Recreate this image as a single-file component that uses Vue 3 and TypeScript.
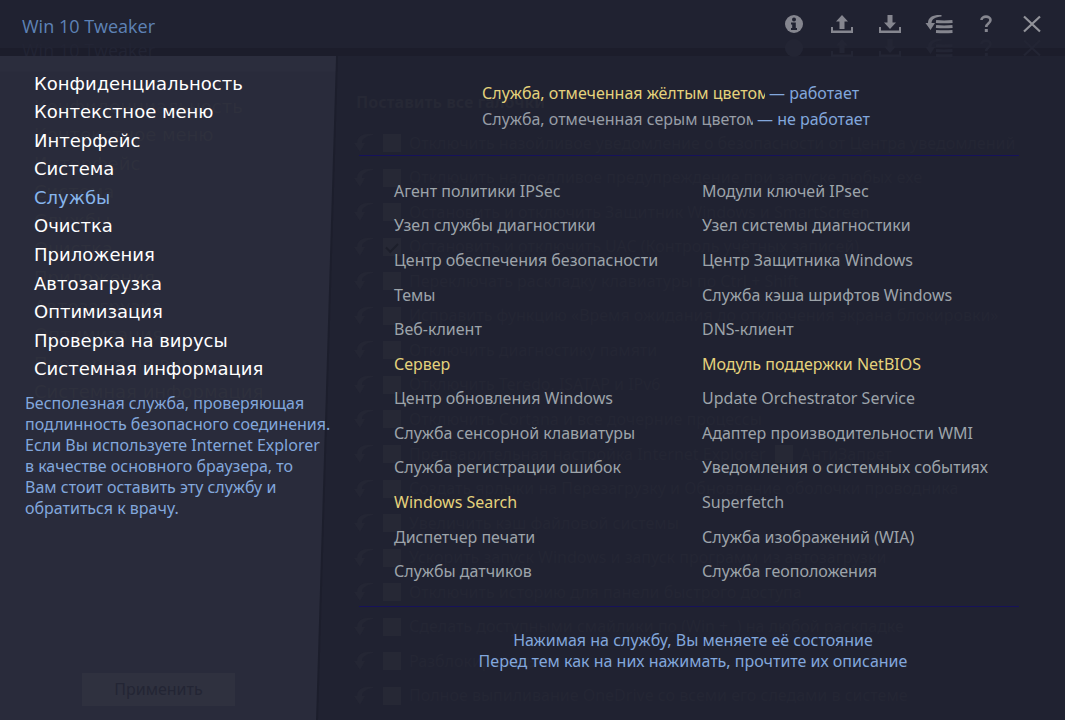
<script setup lang="ts">
import { ref } from 'vue'

interface Service {
  name: string
  running: boolean
}

interface Tweak {
  label: string
  checked?: boolean
  extra?: string
}

const sections: string[] = [
  'Конфиденциальность',
  'Контекстное меню',
  'Интерфейс',
  'Система',
  'Службы',
  'Очистка',
  'Приложения',
  'Автозагрузка',
  'Оптимизация',
  'Проверка на вирусы',
  'Системная информация',
]
const active = ref('Службы')

const services = ref<Service[]>([
  { name: 'Агент политики IPSec', running: false },
  { name: 'Модули ключей IPsec', running: false },
  { name: 'Узел службы диагностики', running: false },
  { name: 'Узел системы диагностики', running: false },
  { name: 'Центр обеспечения безопасности', running: false },
  { name: 'Центр Защитника Windows', running: false },
  { name: 'Темы', running: false },
  { name: 'Служба кэша шрифтов Windows', running: false },
  { name: 'Веб-клиент', running: false },
  { name: 'DNS-клиент', running: false },
  { name: 'Сервер', running: true },
  { name: 'Модуль поддержки NetBIOS', running: true },
  { name: 'Центр обновления Windows', running: false },
  { name: 'Update Orchestrator Service', running: false },
  { name: 'Служба сенсорной клавиатуры', running: false },
  { name: 'Адаптер производительности WMI', running: false },
  { name: 'Служба регистрации ошибок', running: false },
  { name: 'Уведомления о системных событиях', running: false },
  { name: 'Windows Search', running: true },
  { name: 'Superfetch', running: false },
  { name: 'Диспетчер печати', running: false },
  { name: 'Служба изображений (WIA)', running: false },
  { name: 'Службы датчиков', running: false },
  { name: 'Служба геоположения', running: false },
])

const tweaks: Tweak[] = [
  { label: 'Отключить назойливое уведомление о безопасности от Центра уведомлений' },
  { label: 'Отключить надоедливое предупреждение при запуске любых exe' },
  { label: 'Остановить и отключить Защитник Windows и SmartScreen' },
  { label: 'Остановить и отключить UAC (Контроль учётных записей)', checked: true },
  { label: 'Переключать раскладку клавиатуры по Ctrl + Shift' },
  { label: 'Исправить функцию «Время ожидания до отключения экрана блокировки»' },
  { label: 'Отключить диагностику памяти' },
  { label: 'Отключить Teredo, ISATAP и IPv6' },
  { label: 'Отключить Cortana и все дочерние процессы' },
  { label: 'Предварительная настройка Internet Explorer', extra: 'АнтиЗапрет' },
  { label: 'Создать ярлыки на Перезагрузку и Обновление оболочки проводника' },
  { label: 'Увеличить кэш файловой системы' },
  { label: 'Ускорить запуск Windows и запуск программ из автозагрузки' },
  { label: 'Отключить историю для панели быстрого доступа' },
  { label: 'Сделать доступными смайлики по (Win + .) на любой раскладке' },
  { label: 'Разблокировать' },
  { label: 'Полное выпиливание OneDrive со всеми его следами в системе' },
]
</script>

<template>
  <div class="app">
    <header class="topbar">
      <h1 class="title">Win 10 Tweaker</h1>
      <div class="actions">
        <button class="action" type="button" aria-label="О программе">
          <svg width="32" height="24" viewBox="0 0 32 24">
            <circle cx="16" cy="12" r="9" fill="#85868f" />
            <circle cx="16" cy="7.500" r="2" fill="#202231" />
            <path d="M13 10.500h4.800v5.500H19v2h-6v-2h1.200v-3.500H13z" fill="#202231" />
          </svg>
        </button>
        <button class="action" type="button" aria-label="Экспорт">
          <svg width="32" height="24" viewBox="0 0 32 24" fill="#85868f">
            <path d="M16 3l6 6.500h-3.500V17h-5V9.500H10z" />
            <path d="M5 15h2v3.500h18V15H27v6H5z" />
          </svg>
        </button>
        <button class="action" type="button" aria-label="Импорт">
          <svg width="32" height="24" viewBox="0 0 32 24" fill="#85868f">
            <path d="M16 17l6-6.500h-3.500V3h-5v7.500H10z" />
            <path d="M5 15h2v3.500h18V15H27v6H5z" />
          </svg>
        </button>
        <button class="action" type="button" aria-label="Вернуть всё">
          <svg width="32" height="24" viewBox="0 0 32 24">
            <path d="M19.500 3C12 2.500 6 4.500 6 11H3.500l5 7L13 11H9.500C10 7 13 5 19.500 4.500z" fill="#85868f" />
            <path d="M14 9.500q8 .8 16.500 0M14 14.500q8 .8 16.500 0M14 19.500q8 .5 16.500 0" fill="none" stroke="#85868f" stroke-width="2.800" />
          </svg>
        </button>
        <button class="action" type="button" aria-label="Справка">
          <svg width="32" height="24" viewBox="0 0 32 24">
            <path d="M11.500 8C11.500 3.500 20.500 3.500 20.500 8c0 3.500-4.300 3.500-4.300 7" fill="none" stroke="#85868f" stroke-width="2.600" />
            <rect x="14.800" y="17" width="3" height="3" fill="#85868f" />
          </svg>
        </button>
        <button class="action" type="button" aria-label="Закрыть">
          <svg width="32" height="24" viewBox="0 0 32 24">
            <path d="M6 4.500L22 19.500M22 4.500L6 19.500" stroke="#92939a" stroke-width="2.200" />
          </svg>
        </button>
      </div>
    </header>

    <div class="body">
      <aside class="sidebar">
        <div class="under side-under" aria-hidden="true" inert>
          <button class="apply" type="button" disabled>Применить</button>
        </div>
        <nav class="menu">
          <button
            v-for="s in sections"
            :key="s"
            type="button"
            class="menu-item"
            :class="{ active: s === active }"
            @click="active = s"
          >{{ s }}</button>
        </nav>
        <p class="description">
          Бесполезная служба, проверяющая<br />
          подлинность безопасного соединения.<br />
          Если Вы используете Internet Explorer<br />
          в качестве основного браузера, то<br />
          Вам стоит оставить эту службу и<br />
          обратиться к врачу.
        </p>
      </aside>

      <main class="content">
        <div class="under tweaks" aria-hidden="true" inert>
          <h2 class="tweaks-title">Поставить все галочки</h2>
          <div class="tweak-list">
            <div v-for="t in tweaks" :key="t.label" class="tweak">
              <svg width="20" height="20" viewBox="0 0 20 20">
                <path d="M19 1C10 0 3 3 3 10H0l6 9 5-9H8C8 6 12 3 19 2z" fill="#242634" />
              </svg>
              <label class="check">
                <input type="checkbox" :checked="t.checked" />
                <span>{{ t.label }}</span>
              </label>
              <label v-if="t.extra" class="check">
                <input type="checkbox" />
                <span>{{ t.extra }}</span>
              </label>
            </div>
          </div>
        </div>

        <section class="legend">
          <p><span class="sample yellow">Служба, отмеченная жёлтым цветом</span><span>— работает</span></p>
          <p><span class="sample grey">Служба, отмеченная серым цветом</span><span>— не работает</span></p>
        </section>

        <section class="services">
          <button
            v-for="s in services"
            :key="s.name"
            type="button"
            class="service"
            :class="{ running: s.running }"
            @click="s.running = !s.running"
          >{{ s.name }}</button>
        </section>

        <p class="hint">
          Нажимая на службу, Вы меняете её состояние<br />
          Перед тем как на них нажимать, прочтите их описание
        </p>
      </main>
    </div>
  </div>
</template>

<style>
body {
  margin: 0;
  background: #202231;
}
</style>

<style scoped>
.app {
  min-height: 100vh;
  display: flex;
  flex-direction: column;
  background: #202231;
  color: #82a7dc;
  font-family: 'Noto Sans', 'DejaVu Sans Condensed', sans-serif;
  font-size: 16px;
  line-height: 21px;
  overflow: hidden;
}

h1,
h2,
p {
  margin: 0;
  font-weight: normal;
}

button {
  margin: 0;
  padding: 0;
  border: 0;
  background: none;
  color: inherit;
  font: inherit;
  text-align: left;
  text-shadow: inherit;
  cursor: pointer;
}

.topbar {
  display: flex;
  justify-content: space-between;
  align-items: center;
  height: 48px;
  padding: 0 7px 0 22px;
  border-bottom: 8px solid #1c1d2b;
}

.title {
  padding-top: 4px;
  color: #5e82b6;
  font-family: 'Open Sans', sans-serif;
  font-size: 18px;
  text-shadow: 0 24px 0 #222434;
}

.actions {
  display: flex;
  filter: drop-shadow(0 24px 0 #232534);
}

.action {
  display: flex;
  justify-content: center;
  width: 48px;
}

.body {
  flex: 1;
  display: flex;
}

.under {
  position: absolute;
  inset: 0;
  z-index: -1;
}

.sidebar {
  position: relative;
  z-index: 1;
  flex: none;
  width: 336px;
  padding-top: 13px;
  box-sizing: border-box;
}

.sidebar::before {
  content: '';
  position: absolute;
  inset: 0;
  z-index: -2;
  background: linear-gradient(#2b2d3d 15px, #292b3b 16px);
  clip-path: polygon(0 0, 100% 0, 316px 100%, 0 100%);
}

.sidebar::after {
  content: '';
  position: absolute;
  inset: 0 -4px 0 0;
  z-index: -3;
  background: #1c1e2c;
  clip-path: polygon(0 0, 338px 0, 318px 100%, 0 100%);
}

.menu {
  display: grid;
  grid-auto-rows: 1fr;
  height: 314px;
  padding-left: 34px;
  color: #fff;
  font-family: 'DejaVu Sans', sans-serif;
  font-size: 18px;
  text-shadow: 0 23px 0 #2e303d;
}

.menu-item {
  display: flex;
  align-items: center;
}

.menu-item.active {
  color: #87b5ec;
}

.side-under {
  display: flex;
  flex-direction: column;
  justify-content: flex-end;
  padding-bottom: 14px;
}

.apply {
  width: 153px;
  height: 33px;
  margin-left: 82px;
  background: #2f313f;
  color: #232534;
  text-align: center;
}

.description {
  padding: 10px 0 0 25px;
  white-space: nowrap;
}

.content {
  position: relative;
  z-index: 0;
  flex: 1;
  min-width: 0;
  display: flex;
  flex-direction: column;
  padding: 24px 46px 0 23px;
}

.tweaks {
  padding: 36px 0 0 18px;
  color: #242634;
  white-space: nowrap;
}

.tweaks-title {
  padding-left: 2px;
  color: #262835;
  font-size: 16px;
  font-weight: bold;
}

.tweak-list {
  display: grid;
  grid-auto-rows: 1fr;
  height: 587px;
  padding-top: 13px;
}

.tweak {
  display: flex;
  align-items: center;
  gap: 9px;
}

.check {
  display: flex;
  align-items: center;
  gap: 8px;
}

.check input {
  appearance: none;
  display: grid;
  place-items: center;
  width: 18px;
  height: 18px;
  margin: 0;
  background: #262835;
}

.check input:checked::after {
  content: '';
  width: 10px;
  height: 5px;
  border: solid #1d1f2b;
  border-width: 0 0 2px 2px;
  transform: rotate(-45deg);
}

.legend {
  padding: 0 0 23px 123px;
  border-bottom: 1px solid #16125a;
  line-height: 26px;
  white-space: nowrap;
}

.legend p {
  display: flex;
  gap: 4px;
}

.sample {
  overflow: hidden;
}

.sample.yellow {
  width: 283px;
  color: #e5d27c;
}

.sample.grey {
  width: 271px;
  color: #979da6;
}

.services {
  display: grid;
  grid-template-columns: 308px 1fr;
  grid-auto-rows: 1fr;
  height: 415px;
  padding: 18px 0 17px 35px;
  border-bottom: 1px solid #16125a;
}

.service {
  color: #9da4aa;
  white-space: nowrap;
}

.service.running {
  color: #e5d27c;
}

.hint {
  padding: 23px 0 23px 8px;
  text-align: center;
}
</style>
